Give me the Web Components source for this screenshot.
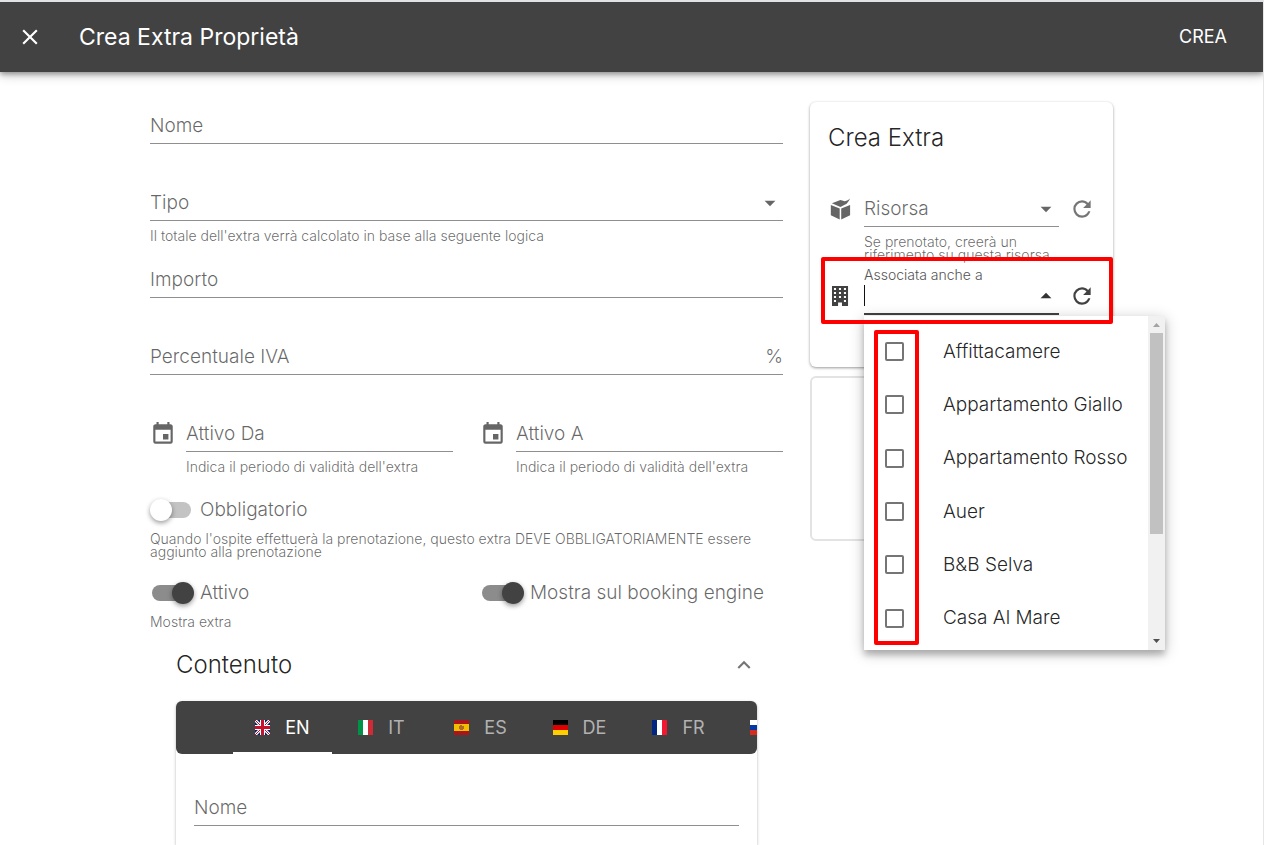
<!DOCTYPE html>
<html lang="it">
<head>
<meta charset="utf-8">
<title>Crea Extra Proprietà</title>
<style>
html,body{margin:0;background:#fff}
body{font-family:Inter,"Open Sans",sans-serif;font-weight:300;font-size:19px;line-height:24px;color:rgba(0,0,0,.87);min-height:100vh;box-sizing:border-box;border-top:2px solid #e0e3e6;border-right:1px solid #e6e6e6}
</style>
</head>
<body>
<extra-page></extra-page>
<script>
const ICONS={
 close:'M19,6.41L17.59,5L12,10.59L6.41,5L5,6.41L10.59,12L5,17.59L6.41,19L12,13.41L17.59,19L19,17.59L13.41,12L19,6.41Z',
 calendar:'M19,19H5V8H19M16,1V3H8V1H6V3H5C3.89,3 3,3.89 3,5V19A2,2 0 0,0 5,21H19A2,2 0 0,0 21,19V5C21,3.89 20.1,3 19,3H18V1M17,12H12V17H17V12Z',
 refresh:'M17.65,6.35C16.2,4.9 14.21,4 12,4A8,8 0 0,0 4,12A8,8 0 0,0 12,20C15.73,20 18.84,17.45 19.73,14H17.65C16.83,16.33 14.61,18 12,18A6,6 0 0,1 6,12A6,6 0 0,1 12,6C13.66,6 15.14,6.69 16.22,7.78L13,11H20V4L17.65,6.35Z',
 down:'M7,10L12,15L17,10H7Z',
 up:'M7,14L12,9L17,14H7Z',
 chevron:'M7.41,15.41L12,10.83L16.59,15.41L18,14L12,8L6,14L7.41,15.41Z',
 box:'M2.6,8.2L10.8,11.6V21.6L2.6,17.8ZM12.2,11.6L20.4,8.2V17.8L12.2,21.6ZM3.6,6.8L11.5,3.6L15.5,4.8Q18.500,4.500 20.4,2.4Q19,5.500 17.2,7.2L11.5,10.2Z',
 building:'M3.700,2.800H18.500V21.200H12.900V18H9.300V21.200H3.700ZM5.500,4.600V6.500H7.400V4.600ZM10.100,4.600V6.500H12V4.600ZM14.700,4.600V6.500H16.600V4.600ZM5.500,8.300V10.200H7.400V8.300ZM10.100,8.300V10.200H12V8.300ZM14.700,8.300V10.200H16.600V8.300ZM5.500,12V13.900H7.400V12ZM10.100,12V13.900H12V12ZM14.700,12V13.900H16.600V12ZM5.500,15.700V17.600H7.400V15.700ZM14.700,15.700V17.600H16.600V15.700Z'
};
const FLAGS={
 en:'<path fill="#012169" d="M0 0h15v15H0z"/><path stroke="#fff" stroke-width="3" d="M0 0l15 15M15 0L0 15"/><path stroke="#c8102e" stroke-width="1" d="M0 0l15 15M15 0L0 15"/><path stroke="#fff" stroke-width="5" d="M7.500 0v15M0 7.500h15"/><path stroke="#c8102e" stroke-width="3" d="M7.500 0v15M0 7.500h15"/>',
 it:'<path fill="#009246" d="M0 0h5v15H0z"/><path fill="#fff" d="M5 0h5v15H5z"/><path fill="#ce2b37" d="M10 0h5v15h-5z"/>',
 es:'<path fill="#aa151b" d="M0 0h15v15H0z"/><path fill="#f1bf00" d="M0 4h15v7H0z"/><path fill="#ad6b2a" d="M5 6h1V5h2v1h2v3H9v1H6V9H5z"/>',
 de:'<path d="M0 0h15v5H0z"/><path fill="#d00" d="M0 5h15v5H0z"/><path fill="#ffce00" d="M0 10h15v5H0z"/>',
 fr:'<path fill="#00267f" d="M0 0h5v15H0z"/><path fill="#fff" d="M5 0h5v15H5z"/><path fill="#f31830" d="M10 0h5v15h-5z"/>',
 ru:'<path fill="#fff" d="M0 0h15v5H0z"/><path fill="#0039a6" d="M0 5h15v5H0z"/><path fill="#d52b1e" d="M0 10h15v5H0z"/>'
};
const define=(name,render)=>customElements.define(name,class extends HTMLElement{
 constructor(){super();this.attachShadow({mode:'open'});}
 connectedCallback(){this.shadowRoot.innerHTML=render(this);}
});
const at=(el,name)=>el.getAttribute(name)||'';
const RESET='*{box-sizing:border-box}button,input,select{font:inherit;color:inherit;border:0;margin:0;padding:0;background:none;outline:0;appearance:none;border-radius:0}';

define('ui-icon',el=>`<style>:host{display:block;flex:none;width:26px;height:26px}svg{display:block;width:100%;height:100%}</style>
<svg viewBox="0 0 24 24" fill="currentColor" fill-rule="evenodd" aria-hidden="true"><path d="${ICONS[at(el,'name')]}"/></svg>`);

define('ui-flag',el=>`<style>:host{display:block;flex:none;width:15px;height:15px}svg{display:block}</style>
<svg width="15" height="15" viewBox="0 0 15 15" aria-hidden="true">${FLAGS[at(el,'code')]}</svg>`);

define('app-bar',()=>`<style>${RESET}
:host{display:flex;align-items:center;height:70px;padding:0 36px 0 17px;background:#424242;color:#fff;position:relative;box-shadow:0 2px 5px rgba(0,0,0,.34),0 4px 10px rgba(0,0,0,.18)}
h1{flex:1;margin:0 0 0 36px;font-size:23px;line-height:30px;font-weight:400}
button{font-size:18px;font-weight:400;cursor:pointer}
</style>
<button aria-label="Chiudi"><ui-icon name="close"></ui-icon></button><h1><slot></slot></h1><button>CREA</button>`);

define('text-field',el=>{
 const kind=at(el,'kind'), active=el.hasAttribute('active');
 const control=kind==='select'?'<select id="c"><option></option></select>':`<input id="c" type="text"${active?' role="combobox" aria-expanded="true"':''}>`;
 const end=kind==='select'?'<ui-icon name="down"></ui-icon>':active?'<ui-icon name="up"></ui-icon>':at(el,'suffix')?`<span>${at(el,'suffix')}</span>`:'';
 return `<style>${RESET}
:host{display:flex;gap:10px;align-items:flex-start;min-height:77px;color:rgba(0,0,0,.6)}
:host([compact]){min-height:55px}
.main{flex:1;min-width:0}
.row{display:grid;grid-template-columns:minmax(0,1fr) auto;align-items:center;height:36px;border-bottom:1px solid #8f8f8f}
label{grid-area:1/1;pointer-events:none;white-space:nowrap}
#c{grid-area:1/1/2/3;width:100%;height:35px;color:#222}
.row ui-icon,.row span{grid-area:1/2;pointer-events:none}
.hint{font-size:14px;line-height:13px;margin-top:8px}
:host([active]) .row{border-bottom:2px solid #424242;height:37px;color:#333}
:host([active]) label{font-size:14px;line-height:13px;align-self:start;margin-top:-10px;color:#555}
:host([active]) .row::before{content:"";grid-area:1/1;width:1px;height:21px;background:#111}
::slotted(ui-icon){margin-top:5px}
</style><slot name="icon"></slot><div class="main"><div class="row"><label for="c">${at(el,'label')}</label>${control}${end}</div>${at(el,'hint')?`<div class="hint">${at(el,'hint')}</div>`:''}</div>`;
});

define('toggle-switch',el=>`<style>${RESET}
:host{display:block;min-height:83px;color:rgba(0,0,0,.6)}
.line{display:flex;align-items:center;height:34px;gap:8px}
label{white-space:nowrap}
input{position:relative;flex:none;width:42px;height:22px;cursor:pointer}
input::before{content:"";position:absolute;inset:3px 1px 3px 2px;border-radius:8px;background:#c3c3c3}
input::after{content:"";position:absolute;left:0;top:0;width:22px;height:22px;border-radius:50%;background:#fff;box-shadow:0 2px 5px rgba(0,0,0,.4)}
input:checked::before{background:#8c8c8c}
input:checked::after{left:22px;background:#424242}
p{margin:5px 0 0;font-size:14px;line-height:13px}
</style><div class="line"><input id="s" type="checkbox" role="switch" ${el.hasAttribute('on')?'checked':''}><label for="s">${at(el,'label')}</label></div>${at(el,'hint')?`<p>${at(el,'hint')}</p>`:''}`);

define('language-tabs',()=>`<style>${RESET}
:host{display:flex;height:53px;padding-left:57px;border-radius:6px;background:#424242;color:rgba(255,255,255,.6);overflow:hidden}
button{display:flex;flex:none;align-items:center;justify-content:center;gap:15px;width:99px;font-size:18px;font-weight:400;border-bottom:2px solid transparent;border-top:2px solid transparent}
button[aria-selected=true]{color:#fff;border-bottom-color:#fff}
button:last-child{justify-content:flex-start;padding-left:22px}
</style>${['en','it','es','de','fr'].map((c,i)=>`<button role="tab" aria-selected="${!i}"><ui-flag code="${c}"></ui-flag>${c.toUpperCase()}</button>`).join('')}<button role="tab" aria-selected="false" aria-label="RU"><ui-flag code="ru"></ui-flag></button>`);

define('content-panel',()=>`<style>${RESET}
:host{display:block;margin:0 26px}
header{display:flex;align-items:center;justify-content:space-between;height:72px}
h2{margin:0;font-size:24px;line-height:30px;font-weight:300}
button{color:rgba(0,0,0,.54)}
.card{border-radius:6px 6px 0 0;box-shadow:0 1px 3px rgba(0,0,0,.3)}
.body{padding:36px 18px 0}
</style><header><h2>Contenuto</h2><button aria-label="Comprimi" aria-expanded="true"><ui-icon name="chevron"></ui-icon></button></header>
<div class="card"><language-tabs></language-tabs><div class="body"><text-field compact label="Nome"></text-field></div></div>`);

define('option-menu',()=>`<style>${RESET}
:host{display:flex;height:334px;background:#fff;box-shadow:0 5px 6px rgba(0,0,0,.2),0 3px 14px rgba(0,0,0,.24);color:rgba(0,0,0,.87)}
ul{flex:1;display:grid;grid-template-rows:repeat(6,1fr);margin:9px 0 5px;padding:0 0 0 21px;list-style:none}
li{display:flex;align-items:center;gap:39px;white-space:nowrap}
input{flex:none;width:19px;height:19px;border:2px solid #757575;border-radius:2px}
.bar{width:17px;background:#f1f1f1;display:flex;flex-direction:column;align-items:center}
.thumb{width:13px;height:201px;background:#c1c1c1}
svg{display:block;width:17px;height:17px}
.fill{flex:1}
</style><ul role="listbox">${['Affittacamere','Appartamento Giallo','Appartamento Rosso','Auer','B&amp;B Selva','Casa Al Mare'].map((t,i)=>`<li><input type="checkbox" id="o${i}"><label for="o${i}">${t}</label></li>`).join('')}</ul>
<div class="bar" aria-hidden="true"><svg viewBox="0 0 17 17"><path fill="#a3a3a3" d="M5 11l3.500-4 3.500 4z"/></svg><div class="thumb"></div><div class="fill"></div><svg viewBox="0 0 17 17"><path fill="#505050" d="M5 6l3.500 4L12 6z"/></svg></div>`);

define('resource-card',()=>`<style>${RESET}
:host{display:block;position:relative}
.card{height:265px;padding:21px 18px;border-radius:6px;background:#fff;box-shadow:0 1px 3px rgba(0,0,0,.4)}
h2{margin:0 0 38px;font-size:24px;line-height:30px;font-weight:300}
.line{display:grid;grid-template-columns:minmax(0,1fr) 26px;gap:10px;color:rgba(0,0,0,.54);height:63px}
.line+.line{height:60px;padding-top:24px;color:#333}
.line+.line ui-icon{color:#424242}
button{height:36px}
.empty{height:165px;margin-top:9px;border:2px solid #e3e3e3;border-radius:6px}
option-menu{position:absolute;left:54px;top:214px;width:301px}
.mark{position:absolute;border:4px solid #f00;border-radius:2px;pointer-events:none}
.field-mark{left:11px;top:155px;width:292px;height:67px}
.check-mark{left:64px;top:228px;width:45px;height:315px}
</style>
<section class="card"><h2>Crea Extra</h2>
<div class="line"><text-field kind="select" label="Risorsa" hint="Se prenotato, creerà un riferimento su questa risorsa"><ui-icon slot="icon" name="box"></ui-icon></text-field><button aria-label="Aggiorna risorse"><ui-icon name="refresh"></ui-icon></button></div>
<div class="line"><text-field active label="Associata anche a"><ui-icon slot="icon" name="building"></ui-icon></text-field><button aria-label="Aggiorna proprietà"><ui-icon name="refresh"></ui-icon></button></div>
</section><section class="empty"></section>
<option-menu></option-menu><div class="mark field-mark"></div><div class="mark check-mark"></div>`);

define('extra-page',()=>`<style>${RESET}
:host{display:block}
main{display:grid;grid-template-columns:minmax(0,1fr) 303px;gap:27px;align-items:start;max-width:963px;margin:0 auto;padding-top:30px}
form{padding-top:6px}
.pair{display:grid;grid-template-columns:1fr 1fr;gap:27px}
.pair ui-icon{color:rgba(0,0,0,.6)}
.last{height:53px}
</style><app-bar>Crea Extra Proprietà</app-bar>
<main><form>
<text-field label="Nome"></text-field>
<text-field kind="select" label="Tipo" hint="Il totale dell'extra verrà calcolato in base alla seguente logica"></text-field>
<text-field label="Importo"></text-field>
<text-field label="Percentuale IVA" suffix="%"></text-field>
<div class="pair"><text-field label="Attivo Da" hint="Indica il periodo di validità dell'extra"><ui-icon slot="icon" name="calendar"></ui-icon></text-field><text-field label="Attivo A" hint="Indica il periodo di validità dell'extra"><ui-icon slot="icon" name="calendar"></ui-icon></text-field></div>
<toggle-switch label="Obbligatorio" hint="Quando l'ospite effettuerà la prenotazione, questo extra DEVE OBBLIGATORIAMENTE essere aggiunto alla prenotazione"></toggle-switch>
<div class="pair last"><toggle-switch on label="Attivo" hint="Mostra extra"></toggle-switch><toggle-switch on label="Mostra sul booking engine"></toggle-switch></div>
<content-panel></content-panel>
</form><resource-card></resource-card></main>`);
</script>
</body>
</html>
